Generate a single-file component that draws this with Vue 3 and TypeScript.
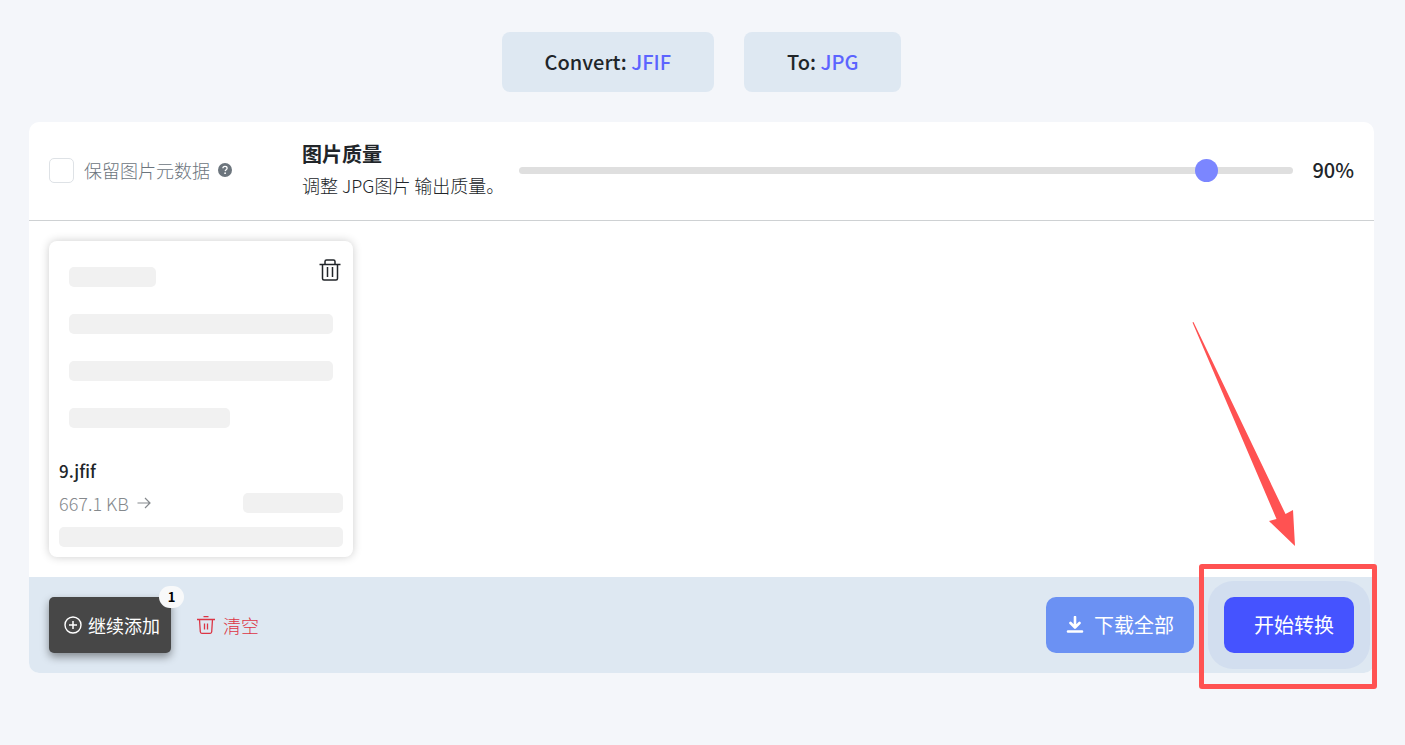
<script setup lang="ts">
import { ref } from 'vue'

interface QueuedFile {
  id: number
  name: string
  size: string
}

const keepMetadata = ref(false)
const quality = ref(90)
const files = ref<QueuedFile[]>([{ id: 1, name: '9.jfif', size: '667.1 KB' }])

function removeFile(id: number): void {
  files.value = files.value.filter((file) => file.id !== id)
}

function clearFiles(): void {
  files.value = []
}
</script>

<template>
  <main class="page">
    <header class="formats">
      <div class="format">Convert: <span class="format-name">JFIF</span></div>
      <div class="format">To: <span class="format-name">JPG</span></div>
    </header>

    <section class="panel">
      <div class="options">
        <div class="metadata">
          <input id="keep-metadata" v-model="keepMetadata" type="checkbox" class="checkbox" />
          <label for="keep-metadata">保留图片元数据</label>
          <svg class="help" viewBox="0 0 16 16" aria-hidden="true">
            <circle cx="8" cy="8" r="8" fill="currentColor" />
            <path d="M5.6 6.1c0-1.3 1-2.2 2.4-2.2s2.4.9 2.4 2.1c0 1.6-2.1 1.7-2.2 3.3" fill="none" stroke="#fff" stroke-width="1.5" />
            <circle cx="8.1" cy="11.6" r="1" fill="#fff" />
          </svg>
        </div>
        <div class="quality-text">
          <label class="quality-title" for="quality">图片质量</label>
          <span class="quality-note">调整 JPG图片 输出质量。</span>
        </div>
        <input id="quality" v-model.number="quality" class="slider" type="range" min="0" max="100" />
        <output class="quality-value" for="quality">{{ quality }}%</output>
      </div>

      <div class="files">
        <article v-for="file in files" :key="file.id" class="card">
          <div class="preview">
            <span class="bone bone-short"></span>
            <span class="bone"></span>
            <span class="bone"></span>
            <span class="bone bone-medium"></span>
          </div>
          <button class="remove" type="button" aria-label="删除" @click="removeFile(file.id)">
            <svg viewBox="0 0 22 22" aria-hidden="true">
              <path d="M.5 5.500h21M6 5V2.500q0-1.500 1.500-1.500h7Q16 1 16 2.500V5M3.500 5.500v14q0 1.500 1.500 1.500h12q1.500 0 1.500-1.500v-14M8.500 8v10M13.500 8v10" fill="none" stroke="currentColor" stroke-width="1.5" />
            </svg>
          </button>
          <div class="name">{{ file.name }}</div>
          <div class="size-row">
            <span>{{ file.size }}</span>
            <svg class="to-arrow" viewBox="0 0 14 14" aria-hidden="true">
              <path d="M.5 7h12.500M8 2l5 5-5 5" fill="none" stroke="currentColor" stroke-width="1.2" />
            </svg>
            <span class="bone bone-size"></span>
          </div>
          <span class="bone"></span>
        </article>
      </div>

      <footer class="actions">
        <button class="add" type="button">
          <svg class="icon" viewBox="0 0 18 18" aria-hidden="true">
            <path d="M9 5v8M5 9h8" stroke="currentColor" stroke-width="1.500" />
            <circle cx="9" cy="9" r="8" fill="none" stroke="currentColor" stroke-width="1.400" />
          </svg>
          继续添加
          <span class="badge">{{ files.length }}</span>
        </button>
        <button class="clear" type="button" @click="clearFiles">
          <svg class="icon" viewBox="0 0 18 18" aria-hidden="true">
            <path d="M0 3.500h18M6.500.7h5M2.500 3.500l.8 12.300q.1 1.500 1.500 1.500h8.400q1.400 0 1.500-1.500l.8-12.300M7.500 7.500v6M10.500 7.500v6" fill="none" stroke="currentColor" stroke-width="1.300" />
          </svg>
          清空
        </button>
        <button class="primary download" type="button">
          <svg class="icon" viewBox="0 0 18 18" aria-hidden="true">
            <path d="M9 1v10M4.500 7L9 11.500 13.500 7M2 15.500h14" fill="none" stroke="currentColor" stroke-width="2.600" stroke-linecap="round" stroke-linejoin="round" />
          </svg>
          下载全部
        </button>
        <div class="convert-wrap">
          <button class="primary convert" type="button">开始转换</button>
          <svg class="pointer" viewBox="0 0 104 225" aria-hidden="true">
            <path d="M2.500 1L94.500 193l7.500-4 2 36-26-25 7.500-2L1.500 1.500z" fill="#ff5252" />
          </svg>
          <div class="highlight"></div>
        </div>
      </footer>
    </section>
  </main>
</template>

<style>
html {
  background: #f4f6fa;
}
body {
  margin: 0;
}
</style>

<style scoped>
.page {
  box-sizing: border-box;
  padding: 32px 31px 32px 29px;
  overflow: hidden;
  color: #212529;
  font-family: "Noto Sans CJK SC", sans-serif;
  font-size: 18px;
  font-weight: 300;
  line-height: 24px;
}
button {
  border: 0;
  padding: 0;
  background: none;
  color: inherit;
  font: inherit;
  cursor: pointer;
}
.formats {
  display: flex;
  justify-content: center;
  gap: 30px;
  margin-bottom: 30px;
}
.format {
  padding: 15px 43px;
  border-radius: 8px;
  background: #dee8f2;
  font-size: 20px;
  font-weight: 500;
  line-height: 30px;
}
.format-name {
  color: #5c64ff;
}
.panel {
  border-radius: 10px;
  background: #fff;
}
.options {
  display: flex;
  align-items: center;
  padding: 17px 20px 19px;
  border-bottom: 1px solid #ced1d3;
}
.metadata {
  display: flex;
  align-items: center;
  gap: 8px;
  width: 253px;
  color: #6c757d;
}
.checkbox {
  appearance: none;
  width: 25px;
  height: 25px;
  margin: 0 2px 0 0;
  border: 1px solid #dee2e6;
  border-radius: 5px;
  background: #fff;
}
.checkbox:checked {
  background: #7b86ff;
}
.help {
  width: 14px;
  height: 14px;
}
.quality-text {
  display: flex;
  flex-direction: column;
  width: 217px;
  white-space: nowrap;
}
.quality-title {
  font-size: 20px;
  font-weight: 700;
  line-height: 30px;
}
.quality-note {
  line-height: 32px;
}
.slider {
  appearance: none;
  flex: 1;
  min-width: 0;
  height: 7px;
  margin: 0 19px 0 0;
  border-radius: 4px;
  background: #dfdfdf;
}
.slider::-webkit-slider-thumb {
  appearance: none;
  width: 23px;
  height: 23px;
  border-radius: 50%;
  background: #7b86ff;
}
.quality-value {
  font-size: 20px;
  font-weight: 500;
}
.files {
  display: flex;
  flex-wrap: wrap;
  gap: 20px;
  padding: 20px;
}
.card {
  position: relative;
  box-sizing: border-box;
  width: 304px;
  padding: 10px;
  border-radius: 8px;
  background: #fff;
  box-shadow: 0 0 10px rgba(0, 0, 0, 0.2);
}
.preview {
  display: flex;
  flex-direction: column;
  gap: 27px;
  padding: 16px 10px 31px;
}
.bone {
  display: block;
  height: 20px;
  border-radius: 5px;
  background: #f1f1f1;
}
.bone-short {
  width: 33%;
}
.bone-medium {
  width: 61%;
}
.bone-size {
  width: 100px;
  margin-left: auto;
}
.remove {
  position: absolute;
  top: 18px;
  right: 12px;
  width: 22px;
  height: 22px;
}
.remove svg {
  display: block;
}
.name {
  font-size: 17px;
  font-weight: 500;
}
.size-row {
  display: flex;
  align-items: center;
  margin: 8px 0 12px;
  color: #85898d;
}
.to-arrow {
  width: 14px;
  height: 14px;
  margin-left: 8px;
}
.actions {
  display: flex;
  align-items: center;
  padding: 20px;
  border-radius: 0 0 10px 10px;
  background: #dee8f2;
}
.icon {
  flex: none;
  width: 18px;
  height: 18px;
}
.add {
  position: relative;
  display: flex;
  align-items: center;
  gap: 6px;
  height: 56px;
  padding: 0 11px 0 15px;
  border-radius: 5px;
  background: #474747;
  box-shadow: 0 4px 8px rgba(0, 0, 0, 0.4);
  color: #fff;
  font-weight: 400;
}
.badge {
  position: absolute;
  top: -11px;
  right: -13px;
  width: 25px;
  border-radius: 11px;
  background: #f8f9fa;
  color: #000;
  font-size: 13px;
  font-weight: 700;
  line-height: 22px;
}
.clear {
  display: flex;
  align-items: center;
  gap: 8px;
  margin-left: 26px;
  color: #dc3545;
}
.primary {
  display: flex;
  align-items: center;
  height: 56px;
  border-radius: 10px;
  color: #fff;
  font-size: 20px;
  font-weight: 400;
}
.download {
  gap: 10px;
  margin-left: auto;
  padding: 0 20px;
  background: #6b91f3;
}
.convert-wrap {
  position: relative;
  margin-left: 30px;
}
.convert {
  padding: 0 20px 0 30px;
  background: #4553ff;
  box-shadow: 0 0 0 16px #d2deef;
}
.highlight {
  position: absolute;
  inset: -33px -23px -36px -25px;
  border: 5px solid #ff5252;
  border-radius: 3px;
  pointer-events: none;
}
.pointer {
  position: absolute;
  right: 59px;
  bottom: 107px;
  width: 104px;
  height: 225px;
  overflow: visible;
  pointer-events: none;
}
</style>
